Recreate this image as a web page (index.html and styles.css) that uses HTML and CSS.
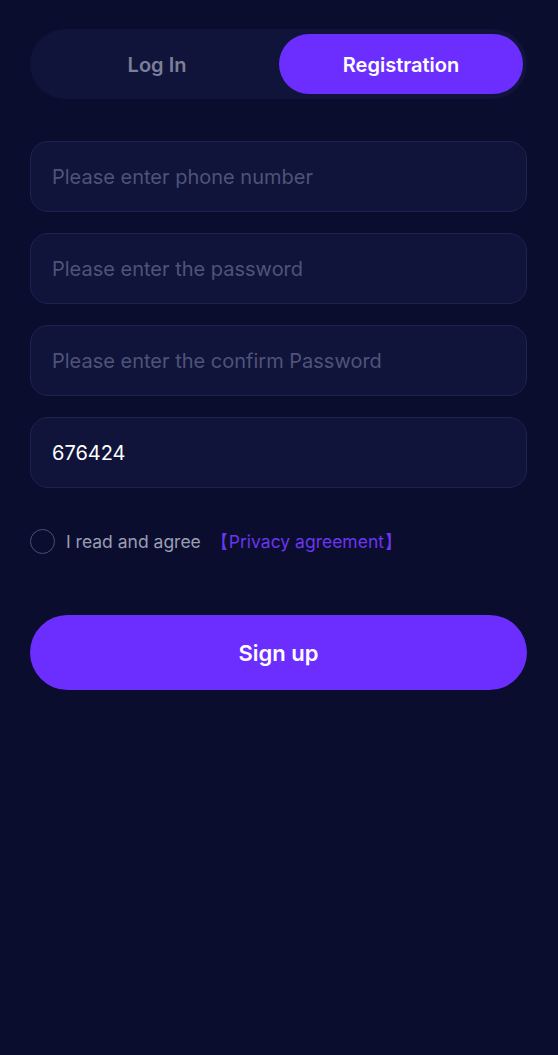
FILE: index.html
```html
<!DOCTYPE html>
<html lang="en">
<head>
<meta charset="utf-8">
<title>Registration</title>
<link rel="stylesheet" href="styles.css">
</head>
<body>
<div class="page">
    <div class="tabs">
        <div class="tab">Log In</div>
        <div class="tab active">Registration</div>
    </div>

    <div class="form">
        <div class="field"><span class="placeholder">Please enter phone number</span></div>
        <div class="field"><span class="placeholder">Please enter the password</span></div>
        <div class="field"><span class="placeholder">Please enter the confirm Password</span></div>
        <div class="field"><span class="value">676424</span></div>
    </div>

    <div class="agree">
        <span class="check"></span>
        <span class="agree-text">I read and agree</span>
        <span class="link">【Privacy agreement】</span>
    </div>

    <div class="signup">Sign up</div>
</div>
</body>
</html>
```

FILE: styles.css
```css
html, body
{
    margin: 0;
    padding: 0;
}
body
{
    background: #0a0d2d;
    font-family: Inter, "Noto Sans", sans-serif;
    min-height: 1055px;
}
.page
{
    padding: 29px 31px 0 30px;
}
.tabs
{
    display: flex;
    height: 70px;
    border-radius: 35px;
    background: #11143a;
    padding: 5px 4px 5px 5px;
    box-sizing: border-box;
}
.tab
{
    flex: 1;
    display: flex;
    align-items: center;
    justify-content: center;
    padding-top: 2px;
    font-size: 20px;
    font-weight: 600;
    color: #7b7f99;
    border-radius: 30px;
}
.tab.active
{
    background: #6c2eff;
    color: #ffffff;
}
.form
{
    display: flex;
    flex-direction: column;
    gap: 21px;
    margin-top: 42px;
}
.field
{
    height: 71px;
    box-sizing: border-box;
    border: 1px solid #1f2350;
    border-radius: 18px;
    background: #10133a;
    display: flex;
    align-items: center;
    padding: 1px 0 0 21px;
    font-size: 20px;
}
.placeholder
{
    color: #4e5379;
}
.value
{
    color: #ffffff;
}
.agree
{
    display: flex;
    align-items: center;
    margin-top: 41px;
    font-size: 17.5px;
}
.check
{
    width: 23px;
    height: 23px;
    border: 1px solid #4a4e72;
    border-radius: 50%;
    margin-right: 11px;
}
.agree-text
{
    color: #9a9db4;
    margin-right: 10px;
}
.link
{
    color: #6a36ef;
}
.signup
{
    margin-top: 61px;
    height: 75px;
    border-radius: 38px;
    background: #6c2eff;
    color: #ffffff;
    font-size: 22px;
    font-weight: 600;
    display: flex;
    align-items: center;
    justify-content: center;
}
```
